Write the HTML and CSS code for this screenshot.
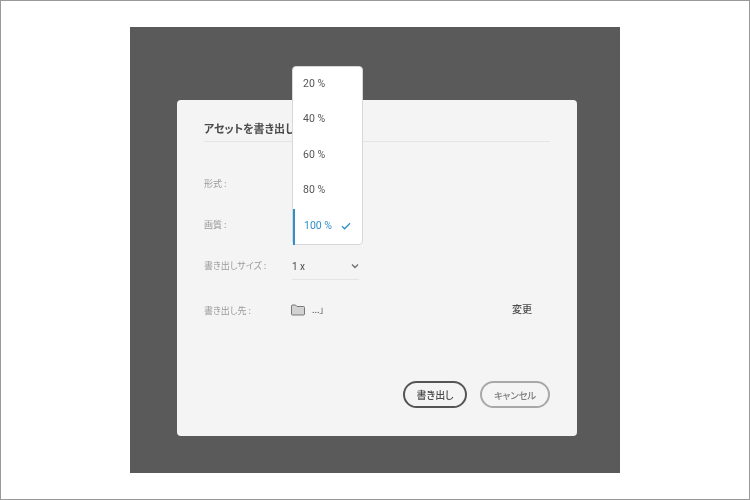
FILE: index.html
```html
<!DOCTYPE html>
<html lang="ja">
<head>
  <meta charset="UTF-8" />
  <title>アセットを書き出し</title>
  <link rel="stylesheet" href="styles.css">
</head>
<body>
  <div class="frame">
    <div class="overlay">
      <div class="dialog">
        <h1 class="dialog__title">アセットを書き出し</h1>
        <div class="form">
          <div class="row">
            <span class="row__label">形式 :</span>
          </div>
          <div class="row">
            <span class="row__label">画質 :</span>
          </div>
          <div class="row">
            <span class="row__label">書き出しサイズ :</span>
            <div class="select">
              <span>1 x</span>
              <svg width="8" height="6" viewBox="0 0 8 6"><path d="M1 1.5 L4 4.5 L7 1.5" fill="none" stroke="#707070" stroke-width="1.4"/></svg>
            </div>
          </div>
          <div class="row row--dest">
            <span class="row__label">書き出し先 :</span>
            <div class="dest">
              <svg class="dest__icon" width="14" height="12" viewBox="0 0 14 12"><path d="M0.5 2 Q0.5 1 1.5 1 H4.5 L6 2.5 H12.5 Q13.5 2.5 13.5 3.5 V10 Q13.5 11 12.5 11 H1.5 Q0.5 11 0.5 10 Z" fill="#d2d2d2" stroke="#777" stroke-width="1"/></svg>
              <span class="dest__path">...」</span>
            </div>
            <button class="link-button">変更</button>
          </div>
        </div>
        <div class="actions">
          <button class="pill pill--primary">書き出し</button>
          <button class="pill pill--secondary">キャンセル</button>
        </div>
        <ul class="menu">
          <li class="menu__item">20 %</li>
          <li class="menu__item">40 %</li>
          <li class="menu__item">60 %</li>
          <li class="menu__item">80 %</li>
          <li class="menu__item menu__item--selected">
            <span>100 %</span>
            <svg width="10" height="8" viewBox="0 0 10 8"><path d="M1 4.2 L3.6 6.8 L9 1.2" fill="none" stroke="#2f8fc9" stroke-width="1.3"/></svg>
          </li>
        </ul>
      </div>
    </div>
  </div>
</body>
</html>
```

FILE: styles.css
```css
* {
  box-sizing: border-box;
  margin: 0;
  padding: 0;
}
body {
  width: 750px;
  height: 500px;
  overflow: hidden;
  background: #fff;
  font-family: "Noto Sans CJK JP", "Noto Sans", sans-serif;
  font-feature-settings: "palt";
}
.frame {
  width: 750px;
  height: 500px;
  border: 1px solid #999;
  padding-top: 26px;
  display: flex;
  justify-content: center;
  align-items: flex-start;
}
.overlay {
  width: 490px;
  height: 446px;
  background: #5a5a5a;
  padding: 73px 0 0 4px;
  display: flex;
  justify-content: center;
}
.dialog {
  position: relative;
  width: 400px;
  height: 336px;
  padding: 21px 27px 0;
  background: #f4f4f4;
  border-radius: 4px;
  will-change: transform;
}
.dialog__title {
  height: 21px;
  font-size: 11px;
  line-height: 15px;
  font-weight: 700;
  color: #4b4b4b;
  border-bottom: 1px solid #e4e4e4;
}
.form {
  padding-top: 21px;
}
.row {
  display: flex;
  align-items: center;
  height: 41px;
  font-size: 9px;
  color: #9a9a9a;
}
.row--dest {
  height: 47px;
}
.row__label {
  width: 88px;
}
.row--dest .row__label {
  margin-top: 2px;
}
.select {
  width: 67px;
  height: 27px;
  margin-top: 1px;
  padding-top: 1px;
  display: flex;
  align-items: center;
  justify-content: space-between;
  border-bottom: 1px solid #e4e4e4;
  font-family: Roboto, sans-serif;
  font-size: 10px;
  color: #4b4b4b;
}
.dest {
  display: flex;
  align-items: center;
  gap: 7px;
  flex: 1;
}
.dest__icon {
  margin-left: -1px;
}
.dest__path {
  font-size: 9px;
  color: #555;
}
.link-button {
  border: none;
  background: none;
  margin: 0 18px 2px 0;
  font: 500 10px "Noto Sans CJK JP", sans-serif;
  color: #4b4b4b;
}
.actions {
  position: absolute;
  right: 27px;
  bottom: 28px;
  display: flex;
  gap: 13px;
}
.pill {
  height: 27px;
  border-radius: 14px;
  background: transparent;
  font: 500 10px "Noto Sans CJK JP", sans-serif;
  font-feature-settings: "palt";
}
.pill--primary {
  width: 64px;
  border: 2px solid #555;
  color: #4b4b4b;
}
.pill--secondary {
  width: 70px;
  border: 2px solid #a8a8a8;
  color: #7d7d7d;
  font-size: 9.5px;
  letter-spacing: -0.2px;
}
.menu {
  position: absolute;
  left: 115px;
  top: -34px;
  width: 71px;
  height: 179px;
  list-style: none;
  background: #fff;
  border: 1px solid #d8d8d8;
  border-radius: 4px;
}
.menu__item {
  height: 35.5px;
  padding: 0 0 3px 10px;
  display: flex;
  align-items: center;
  font-family: Roboto, sans-serif;
  font-size: 10.5px;
  color: #555;
}
.menu__item--selected {
  justify-content: space-between;
  padding: 0 11px 2px 9px;
  border-left: 2px solid #2f8fc9;
  color: #2f8fc9;
}
```
